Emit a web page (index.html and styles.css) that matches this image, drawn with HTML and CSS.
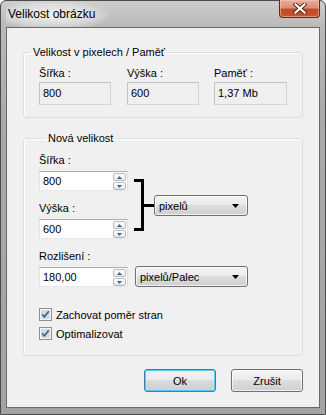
FILE: index.html
```html
<!DOCTYPE html>
<html lang="cs">
<head>
    <meta charset="UTF-8">
    <title>Velikost obrázku</title>
    <link rel="stylesheet" href="styles.css">
</head>
<body>
    <div class="window">
        <div class="titlebar">
            <span class="title">Velikost obrázku</span>
            <div class="close-btn">
                <svg width="14" height="11" viewBox="0 0 14 11">
                    <path d="M2.5 1.5 L11.5 9.5 M11.5 1.5 L2.5 9.5" stroke="#4a2418" stroke-width="4" stroke-linecap="square"/>
                    <path d="M2.5 1.5 L11.5 9.5 M11.5 1.5 L2.5 9.5" stroke="#fff" stroke-width="2.2" stroke-linecap="square"/>
                </svg>
            </div>
        </div>

        <div class="client">
            <!-- aktuální velikost -->
            <fieldset class="group group-current">
                <legend>Velikost v pixelech / Paměť</legend>
                <div class="info-grid">
                    <div>
                        <div class="label">Šířka :</div>
                        <div class="field readonly">800</div>
                    </div>
                    <div>
                        <div class="label">Výška :</div>
                        <div class="field readonly">600</div>
                    </div>
                    <div>
                        <div class="label">Paměť :</div>
                        <div class="field readonly wide">1,37 Mb</div>
                    </div>
                </div>
            </fieldset>

            <!-- nová velikost -->
            <fieldset class="group group-new">
                <legend>Nová velikost</legend>
                <div class="size-row">
                    <div class="size-fields">
                        <div class="label">Šířka :</div>
                        <div class="spin">
                            <span class="spin-value">800</span>
                            <span class="spin-buttons">
                                <span class="spin-btn"><svg width="5" height="3"><path d="M0 3 L2.5 0 L5 3 Z" fill="#3f6494"/></svg></span>
                                <span class="spin-btn"><svg width="5" height="3"><path d="M0 0 L2.5 3 L5 0 Z" fill="#3f6494"/></svg></span>
                            </span>
                        </div>
                        <div class="label">Výška :</div>
                        <div class="spin">
                            <span class="spin-value">600</span>
                            <span class="spin-buttons">
                                <span class="spin-btn"><svg width="5" height="3"><path d="M0 3 L2.5 0 L5 3 Z" fill="#3f6494"/></svg></span>
                                <span class="spin-btn"><svg width="5" height="3"><path d="M0 0 L2.5 3 L5 0 Z" fill="#3f6494"/></svg></span>
                            </span>
                        </div>
                    </div>
                    <div class="bracket"></div>
                    <div class="bracket-tick"></div>
                    <div class="select select-unit">
                        <span>pixelů</span>
                        <svg width="7" height="4"><path d="M0 0 L7 0 L3.5 4 Z" fill="#000"/></svg>
                    </div>
                </div>

                <div class="label">Rozlišení :</div>
                <div class="res-row">
                    <div class="spin">
                        <span class="spin-value">180,00</span>
                        <span class="spin-buttons">
                            <span class="spin-btn"><svg width="5" height="3"><path d="M0 3 L2.5 0 L5 3 Z" fill="#3f6494"/></svg></span>
                            <span class="spin-btn"><svg width="5" height="3"><path d="M0 0 L2.5 3 L5 0 Z" fill="#3f6494"/></svg></span>
                        </span>
                    </div>
                    <div class="select select-res">
                        <span>pixelů/Palec</span>
                        <svg width="7" height="4"><path d="M0 0 L7 0 L3.5 4 Z" fill="#000"/></svg>
                    </div>
                </div>

                <div class="check first">
                    <svg width="13" height="13" viewBox="0 0 13 13">
                        <rect x="0.5" y="0.5" width="12" height="12" fill="#f6f6f6" stroke="#8e8f8f"/>
                        <rect x="2" y="2" width="9" height="9" fill="#d3dbe4"/>
                        <path d="M3.2 6.3 L5.4 8.8 L9.8 3.2" stroke="#4a6690" stroke-width="1.8" fill="none"/>
                    </svg>
                    <span>Zachovat poměr stran</span>
                </div>
                <div class="check">
                    <svg width="13" height="13" viewBox="0 0 13 13">
                        <rect x="0.5" y="0.5" width="12" height="12" fill="#f6f6f6" stroke="#8e8f8f"/>
                        <rect x="2" y="2" width="9" height="9" fill="#d3dbe4"/>
                        <path d="M3.2 6.3 L5.4 8.8 L9.8 3.2" stroke="#4a6690" stroke-width="1.8" fill="none"/>
                    </svg>
                    <span>Optimalizovat</span>
                </div>
            </fieldset>

            <div class="buttons">
                <button class="btn btn-default">Ok</button>
                <button class="btn">Zrušit</button>
            </div>
        </div>
    </div>
</body>
</html>
```

FILE: styles.css
```css
body {
    margin: 0;
    font-family: "Liberation Sans", Arial, sans-serif;
    font-size: 11px;
    color: #000;
    background: #fff;
}

/* okno */
.window {
    box-sizing: border-box;
    width: 326px;
    height: 415px;
    border: 1px solid #4b4b4b;
    border-radius: 6px 6px 0 0;
    background: linear-gradient(to bottom, #cdcdcd 0, #b9b9b9 26px, #aaaaaa 120px, #a3a3a3 100%);
    padding: 0 5px 6px 5px;
    display: flex;
    flex-direction: column;
}
.titlebar {
    height: 26px;
    display: flex;
    justify-content: space-between;
    align-items: flex-start;
}
.title {
    font-size: 12px;
    line-height: 26px;
    padding: 0 14px 0 2px;
    background: radial-gradient(ellipse at 45% 55%, rgba(255,255,255,0.75) 0, rgba(255,255,255,0.35) 55%, rgba(255,255,255,0) 75%);
}
.close-btn {
    box-sizing: border-box;
    width: 41px;
    height: 18px;
    margin-top: -1px;
    border: 1px solid #5a2a1c;
    border-top: none;
    border-radius: 0 0 4px 4px;
    background: linear-gradient(to bottom, #e7ad99 0, #d9907a 45%, #c24a28 55%, #c8552f 100%);
    box-shadow: inset 0 0 0 1px rgba(255,210,190,0.5);
    display: flex;
    align-items: center;
    justify-content: center;
}
.client {
    flex: 1;
    border: 1px solid #6a6a6a;
    background: #f0f0f0;
    padding: 0 16px;
    display: flex;
    flex-direction: column;
}

/* skupiny */
.group {
    margin: 0;
    padding: 0;
    border: 1px solid #d5dfe5;
    border-radius: 3px;
    box-shadow: inset 1px 1px 0 #fff;
}
.group legend {
    margin-left: 7px;
    padding: 0 2px;
    line-height: 13px;
}
.group-current {
    margin-top: 18px;
}
.group-new {
    margin-top: 14px;
    padding: 9px 0 15px 15px;
}
.label {
    line-height: 13px;
}

.info-grid {
    display: grid;
    grid-template-columns: 88px 87px 73px;
    padding: 8px 0 12px 15px;
}
.info-grid .label {
    margin-bottom: 2px;
}
.field {
    box-sizing: border-box;
    width: 72px;
    height: 23px;
    padding-left: 3px;
    line-height: 21px;
}
.field.wide {
    width: 73px;
}
.field.readonly {
    border: 1px solid #c2c2c2;
    border-right-color: #d6d6d6;
    border-bottom-color: #d6d6d6;
    background: #efefef;
}

/* pole s šipkami */
.spin {
    box-sizing: border-box;
    width: 89px;
    height: 20px;
    border: 1px solid #abadb3;
    border-right-color: #dbdfe6;
    border-bottom-color: #e3e9ef;
    border-left-color: #e2e3ea;
    background: #fff;
    display: flex;
}
.spin-value {
    flex: 1;
    padding-left: 3px;
    line-height: 18px;
}
.spin-buttons {
    width: 13px;
    margin: 1px 1px 0 0;
    display: flex;
    flex-direction: column;
    gap: 1px;
}
.spin-btn {
    box-sizing: border-box;
    height: 8px;
    border: 1px solid #b3bcc6;
    border-radius: 2px;
    background: linear-gradient(to bottom, #fdfdfd, #e4e8ec);
    display: flex;
    align-items: center;
    justify-content: center;
}

.size-row {
    display: flex;
    align-items: flex-start;
}
.size-fields .label {
    margin-bottom: 4px;
}
.size-fields .spin + .label {
    margin-top: 11px;
}
.bracket {
    box-sizing: border-box;
    width: 10px;
    height: 52px;
    margin: 25px 0 0 6px;
    border: 3px solid #000;
    border-left: none;
}
.bracket-tick {
    width: 10px;
    height: 3px;
    margin-top: 50px;
    background: #000;
}

.select {
    box-sizing: border-box;
    height: 21px;
    padding: 0 8px 0 4px;
    border: 1px solid #707070;
    border-radius: 3px;
    background: linear-gradient(to bottom, #f2f2f2 0, #ebebeb 50%, #dddddd 50%, #cfcfcf 100%);
    box-shadow: inset 0 0 0 1px rgba(255,255,255,0.7);
    display: flex;
    align-items: center;
    justify-content: space-between;
}
.select-unit {
    width: 94px;
    margin-top: 41px;
}
.select-res {
    width: 113px;
    margin: -1px 0 0 7px;
}

.group-new > .label {
    margin-top: 11px;
    margin-bottom: 4px;
}
.res-row {
    display: flex;
    align-items: flex-start;
}

.check {
    display: flex;
    align-items: center;
    gap: 4px;
    height: 13px;
    margin-top: 6px;
}
.check.first {
    margin-top: 21px;
}

/* tlačítka */
.buttons {
    display: flex;
    justify-content: flex-end;
    gap: 15px;
    margin-top: 13px;
}
.btn {
    box-sizing: border-box;
    width: 72px;
    height: 23px;
    padding: 0;
    font-family: inherit;
    font-size: 11px;
    color: #000;
    border: 1px solid #707070;
    border-radius: 3px;
    background: linear-gradient(to bottom, #f2f2f2 0, #ebebeb 50%, #dddddd 50%, #cfcfcf 100%);
    box-shadow: inset 0 0 0 1px rgba(255,255,255,0.7);
}
.btn-default {
    border-color: #3c7fb1;
    background: linear-gradient(to bottom, #f0f2f3 0, #e8eaeb 50%, #d9dbdc 50%, #cdd0d2 100%);
    box-shadow: inset 0 0 0 1px #59c9f3;
}
```
